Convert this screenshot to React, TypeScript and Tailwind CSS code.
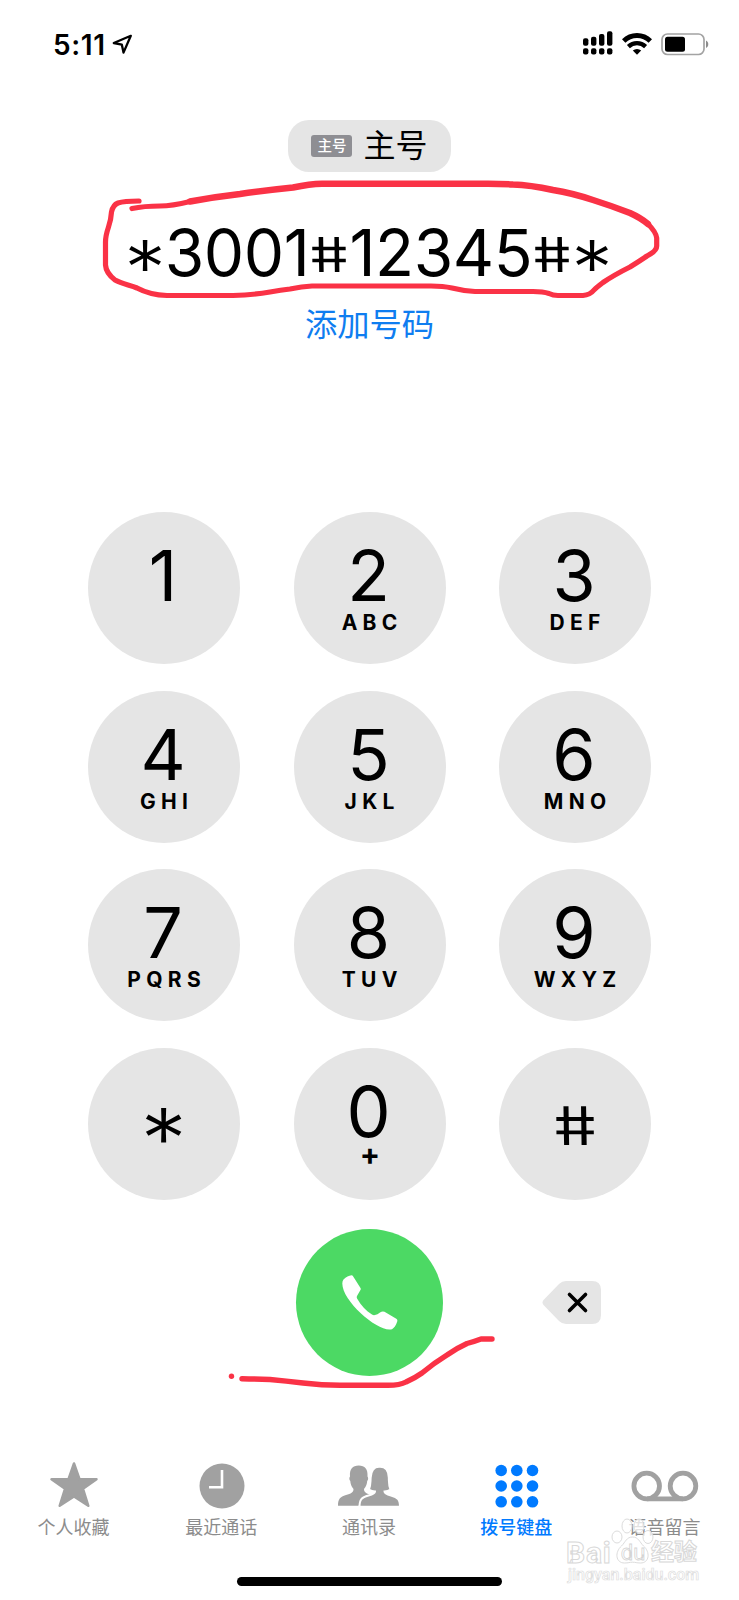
import { useState } from "react";

type Key = {
  value: string;
  letters?: string;
};

const keys: Key[] = [
  { value: "1" },
  { value: "2", letters: "ABC" },
  { value: "3", letters: "DEF" },
  { value: "4", letters: "GHI" },
  { value: "5", letters: "JKL" },
  { value: "6", letters: "MNO" },
  { value: "7", letters: "PQRS" },
  { value: "8", letters: "TUV" },
  { value: "9", letters: "WXYZ" },
  { value: "*" },
  { value: "0", letters: "+" },
  { value: "#" },
];

const StatusBar = () => (
  <header className="flex h-[120px] items-start pt-[30px] pl-[53px] pr-[30px]">
    <span className="text-[28px] leading-[30px] font-semibold tracking-[0.6px]">
      5:11
    </span>
    <svg className="mt-[4px] ml-[6px]" width="21" height="21" viewBox="0 0 21 21">
      <path
        d="M18.8 1.8 1.8 9l8 1.6 1.7 8Z"
        fill="none"
        stroke="black"
        strokeWidth="2.3"
        strokeLinejoin="round"
      />
    </svg>
    <div className="ml-auto flex items-start">
      <svg className="mt-[1px]" width="30" height="25" viewBox="0 0 30 25">
        <rect x="0" y="7.3" width="5.4" height="7.5" rx="2" />
        <rect x="8" y="5.8" width="5.4" height="9" rx="2" />
        <rect x="16" y="3" width="5.4" height="11.8" rx="2" />
        <rect x="24" y="0.2" width="5.4" height="14.6" rx="2" />
        <rect x="0" y="17.2" width="5.4" height="6.2" rx="2" />
        <rect x="8" y="17.2" width="5.4" height="6.2" rx="2" />
        <rect x="16" y="17.2" width="5.4" height="6.2" rx="2" />
        <rect x="24" y="17.2" width="5.4" height="6.2" rx="2" />
      </svg>
      <svg className="mt-[3px] ml-[9px]" width="30" height="22" viewBox="0 0 30 22">
        <path d="M1.7 8a19 19 0 0 1 26.6 0" fill="none" stroke="black" strokeWidth="4.9" />
        <path d="M6.4 13.6a12.5 12.5 0 0 1 17.2 0" fill="none" stroke="black" strokeWidth="4.3" />
        <path d="M10.8 17.5a6.3 6.3 0 0 1 8.4 0L15 21.8Z" />
      </svg>
      <svg className="mt-[3px] ml-[9px]" width="48" height="23" viewBox="0 0 48 23">
        <rect x="1" y="1" width="42" height="20.5" rx="5.5" fill="white" stroke="#a3a3a3" strokeWidth="1.7" />
        <rect x="4" y="3.8" width="20" height="15" rx="2.5" />
        <path d="M45 7.5c3 1.4 3 6.1 0 7.5Z" fill="#8c8c8c" />
      </svg>
    </div>
  </header>
);

// star and pound sit low and small, in line with the middle of the digits
const DialedNumber = ({ value }: { value: string }) => (
  <div className="flex h-[56px] items-center justify-center pr-[2px] text-[64px] leading-[56px] tracking-[-0.4px]">
    {value.split("").map((char, i) => {
      if (char === "*") {
        return (
          <span key={i} className="w-[40px] translate-y-[15px] scale-x-[1.3] scale-y-[1.18] text-center font-light tracking-normal">
            *
          </span>
        );
      }
      if (char === "#") {
        return (
          <span key={i} className="flex w-[40px] translate-y-[2px] scale-x-[0.96] scale-y-[0.75] skew-x-[10deg] justify-center tracking-normal">
            #
          </span>
        );
      }
      return <span key={i}>{char}</span>;
    })}
  </div>
);

const KeyButton = ({ item, onPress }: { item: Key; onPress: (v: string) => void }) => (
  <button
    onClick={() => onPress(item.value)}
    className="flex size-[152px] flex-col items-center rounded-full bg-[#e5e5e5] pt-[29px]"
  >
    {item.value === "*" ? (
      <span className="mt-[21px] inline-block translate-y-[6px] scale-x-[1.32] scale-y-[1.2] text-[70px] leading-[70px] font-light">*</span>
    ) : item.value === "#" ? (
      <span className="mt-[14px] inline-block scale-x-[0.98] scale-y-[0.76] skew-x-[10deg] text-[70px] leading-[70px]">#</span>
    ) : (
      <span className="pr-[2px] text-[70px] leading-[70px]">{item.value}</span>
    )}
    {item.letters === "+" ? (
      <span className="mt-[-5px] pl-[1px] text-[30px] leading-[24px] font-bold">+</span>
    ) : (
      <span className="pl-[5.3px] text-[21px] leading-[23px] font-bold tracking-[5.3px]">
        {item.letters}
      </span>
    )}
  </button>
);

const StarIcon = () => (
  <svg width="50" height="48" viewBox="0 0 50 48">
    <path
      d="M25 2.5 30.5 18.2h17L34 27.8 39.3 44.8 25 35.5 10.7 44.8 16 27.8 2.5 18.2h17Z"
      fill="#a1a1a1"
      stroke="#a1a1a1"
      strokeWidth="2.5"
      strokeLinejoin="round"
    />
  </svg>
);

const ClockIcon = () => (
  <svg width="46" height="48" viewBox="0 0 46 48">
    <circle cx="23" cy="25" r="22.5" fill="#a1a1a1" />
    <path d="M23 9v17.3H10" fill="none" stroke="white" strokeWidth="2.6" />
  </svg>
);

const ContactsIcon = () => (
  <svg className="mr-[1px]" width="62" height="48" viewBox="0 0 62 48" fill="#a1a1a1">
    <path d="M0 44.7c0-6.5 2-9 8-10.7 5-1.4 7.5-2.5 7.5-6-2.3-2.5-3-5.500-3.200-8-1.200-1-1.200-3.500-.3-4.500C11.500 8 14.500 4.500 20.700 4.500S30 8 29.500 15.500c.9 1 .9 3.500-.3 4.500-.2 2.500-.9 5.500-3.200 8 0 3.500 2.500 4.600 7.500 6l5 10.700Z" />
    <path
      d="M21.500 46c0-7.500 2-9.500 9-11.500 4.500-1.200 6.500-2 6.500-4-2.500-.2-4.500-1-6-2 1.800-4.500 1.300-7 1.700-12 .5-7.500 3.800-10.700 8.300-10.700 7-.6 9.500 4.200 9.800 10.700.2 5-.2 7.500 1.700 12-1.500 1-3.500 1.800-6 2 0 2 2 2.800 6.500 4 7 2 9 4 9 11.500Z"
      stroke="white"
      strokeWidth="2"
    />
    <path d="M20 44.700h42V48H20Z" fill="white" />
  </svg>
);

const KeypadIcon = () => (
  <svg width="44" height="48" viewBox="0 0 44 48" fill="#007aff">
    {[9.5, 25, 40.8].map((y) =>
      [6.2, 21.8, 37.5].map((x) => <circle key={`${x}-${y}`} cx={x} cy={y} r="5.8" />)
    )}
  </svg>
);

const VoicemailIcon = () => (
  <svg width="68" height="48" viewBox="0 0 68 48" fill="none" stroke="#a1a1a1" strokeWidth="4.8">
    <circle cx="15.7" cy="25" r="12.8" />
    <circle cx="52" cy="25" r="12.8" />
    <path d="M16 37.8h36" />
  </svg>
);

const tabs = [
  { label: "个人收藏", icon: <StarIcon /> },
  { label: "最近通话", icon: <ClockIcon /> },
  { label: "通讯录", icon: <ContactsIcon /> },
  { label: "拨号键盘", icon: <KeypadIcon />, active: true },
  { label: "语音留言", icon: <VoicemailIcon /> },
];

const TabBar = () => (
  <nav className="grid grid-cols-5">
    {tabs.map((tab) => (
      <div key={tab.label} className="flex flex-col items-center">
        {tab.icon}
        <span
          className={
            tab.active
              ? "mt-[6px] pr-[2px] text-[18px] leading-[26px] font-medium text-[#007aff]"
              : "mt-[6px] pr-[1px] text-[18px] leading-[26px] text-[#8c8c8c]"
          }
        >
          {tab.label}
        </span>
      </div>
    ))}
  </nav>
);

const Annotations = () => (
  <svg
    className="pointer-events-none absolute top-0 left-0"
    width="739"
    height="1600"
    viewBox="0 0 739 1600"
    fill="none"
    stroke="#fa3246"
    strokeLinecap="round"
    strokeLinejoin="round"
  >
    <path
      strokeWidth="5.2"
      d="M139 201Q124 201 118 203Q113 205 111.5 212Q111 220 108.5 227Q105.5 236 105.5 242V265Q106 273 115 280C122 284 130 285 137 288Q150 295 167 295.5H233Q253 295 270 292Q281 290 290 289Q302 286.5 312 286H431Q443 286 452 288Q464 291 475 291.5H533Q543 291.5 549 293.5Q553 295.5 558 295.5H583Q590 295 594 290Q597 287 603 282.5Q614 275 630 267Q638 262 647 256Q656.7 251 656.7 246V238Q656 232 648 224"
    />
    <path
      strokeWidth="6.4"
      d="M648 224Q641 218 630 213Q612 206 593 200Q572 193 553 190Q530 185 513 184.5Q500 183.7 488 183.7H322Q310 184 293 187.5Q268 190 240 194Q214 197 190 201.5"
    />
    <path strokeWidth="5.2" d="M190 201.5Q172 206 160 206Q144 206 132 208.5" />
    <path
      strokeWidth="5.4"
      d="M242 1378.7Q256 1379 270 1379.5Q286 1381 303 1383Q322 1385.3 340 1385.3H388Q400 1385.3 406 1382Q415 1378 422 1373Q434 1363 447 1355Q457 1348 467 1343.5Q473 1342 481 1339H492"
    />
    <circle cx="231.5" cy="1376.3" r="2.7" fill="#fa3246" stroke="none" />
  </svg>
);

const Watermark = () => (
  <div className="absolute top-[1518px] left-[566px] w-[136px] font-[Roboto,'Noto_Sans_CJK_SC',sans-serif] text-white/80">
    <svg className="absolute top-0 left-[45px]" width="44" height="48" viewBox="0 0 44 48" fill="white" fillOpacity="0.75" stroke="#dcdcdc">
      <ellipse cx="6" cy="19" rx="5" ry="6" />
      <ellipse cx="16" cy="8" rx="5" ry="7" />
      <ellipse cx="28" cy="8" rx="5" ry="7" />
      <ellipse cx="37" cy="19" rx="5" ry="6.5" />
      <path d="M21.5 19c6 0 7 5 11 9 7 6 6 17-3 17-4 0-5-.8-8-.8s-4 .8-8 .8c-9 0-10-11-3-17 4-4 5-9 11-9Z" />
    </svg>
    <div className="relative flex h-[30px] items-center pt-[35px] leading-[30px]">
      <span className="w-[49px] text-[30px] font-bold tracking-[0.8px] [-webkit-text-stroke:1px_#d8d8d8]">Bai</span>
      <span className="w-[36px] text-center text-[22px] [-webkit-text-stroke:0.8px_#d4d4d4]">du</span>
      <span className="text-[23px] font-bold [-webkit-text-stroke:1px_#d8d8d8]">经验</span>
    </div>
    <div className="mt-[10px] ml-[2px] text-[16px] leading-[24px] font-medium whitespace-nowrap [-webkit-text-stroke:0.7px_#dedede]">
      jingyan.baidu.com
    </div>
  </div>
);

const App = () => {
  const [number, setNumber] = useState("*3001#12345#*");

  return (
    <div className="relative flex h-[1600px] w-[739px] flex-col overflow-hidden bg-white font-[Inter,'Noto_Sans_CJK_SC',sans-serif] text-black">
      <StatusBar />

      <div className="mx-auto flex h-[52px] w-[163px] items-center justify-center gap-[11px] rounded-[21px] bg-[#e5e5e5]">
        <span className="flex h-[22px] w-[41px] items-center justify-center rounded-[3px] bg-[#8e8e93] text-[14.5px] leading-[22px] font-medium text-white">
          主号
        </span>
        <span className="text-[32px] leading-[48px]">主号</span>
      </div>

      <div className="mt-[53px]">
        <DialedNumber value={number} />
      </div>

      <div className="mt-[20px] text-center text-[32.3px] leading-[48px] text-[#0f7df0]">
        添加号码
      </div>

      <div className="mt-[163.3px] grid grid-cols-[repeat(3,152px)] justify-center gap-x-[53.5px] gap-y-[26.6px]">
        {keys.map((item) => (
          <KeyButton
            key={item.value}
            item={item}
            onPress={(v) => setNumber((prev) => prev + v)}
          />
        ))}
      </div>

      <div className="mt-[28.5px] grid grid-cols-[repeat(3,152px)] items-center justify-center gap-x-[53.5px]">
        <button className="col-start-2 flex size-[147px] items-center justify-center justify-self-center rounded-full bg-[#4cd964]">
          <svg className="mt-[3px] ml-[2px]" width="57" height="57" viewBox="0 0 57 57" fill="white">
            <path d="M1.5 4.5C4 2 7 .5 9.5.3q1 0 1.700 1.200l7.300 11.500q.6 1.200-.2 2.300l-3.300 5.700q-.6 1.500.2 2.700C19 30.500 24 35.500 30 39.600q1.500.8 3 .4 2.500-.5 5-2.500 2.500-1.800 4.500-.7l11.800 7q1.500 1 .9 2.700c-1.200 4-3.200 6.500-5.200 7.700C38 58.500 .3 27 .3 8.500q0-2.500 1.200-4Z" />
          </svg>
        </button>
        <button
          onClick={() => setNumber((prev) => prev.slice(0, -1))}
          className="ml-[43px]"
        >
          <svg width="59" height="43" viewBox="0 0 59 43">
            <path d="M24 0H50Q59 0 59 9V34Q59 43 50 43H24Q20 43 17 40L1.5 24Q-.5 21.5 1.5 19L17 3Q20 0 24 0Z" fill="#e5e5e5" />
            <path d="m27.5 13.5 16 16m0-16-16 16" stroke="black" strokeWidth="3.6" strokeLinecap="round" />
          </svg>
        </button>
      </div>

      <div className="mt-[85px]">
        <TabBar />
      </div>
      <div className="mx-auto mt-[36px] h-[9px] w-[265px] rounded-full bg-black" />

      <Annotations />
      <Watermark />
    </div>
  );
};

export default App;
